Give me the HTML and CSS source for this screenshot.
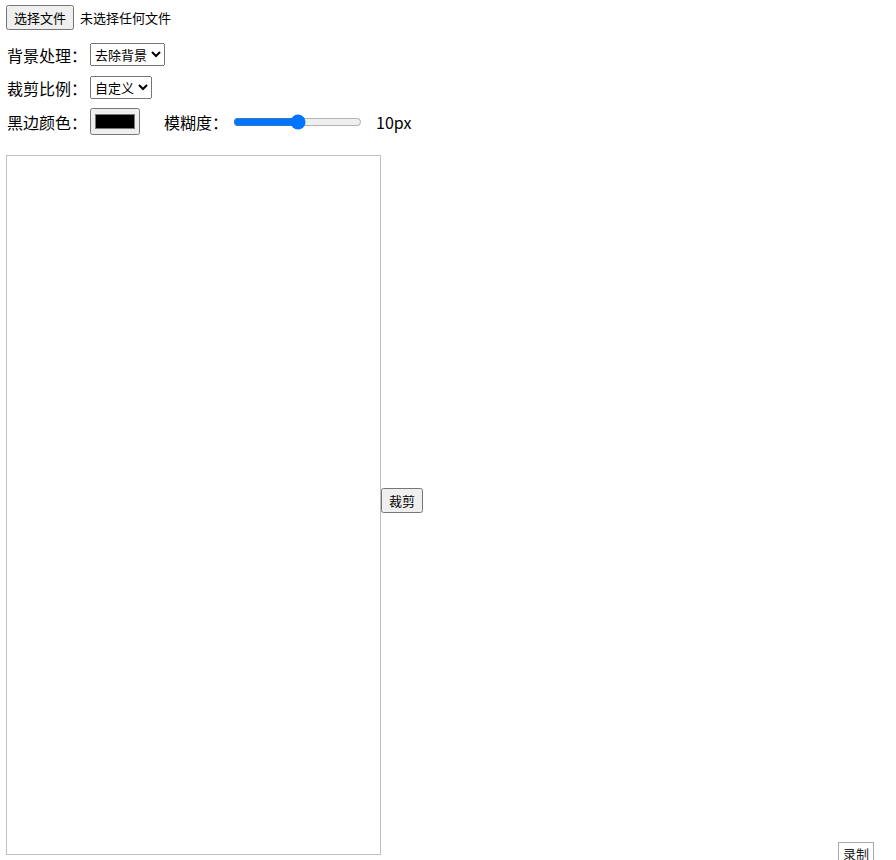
FILE: index.html
```
<html>

<head>
	<title>图片裁剪</title>
	<link rel="stylesheet" href="styles.css">
</head>

<body>
	<div class="file-row">
		<input type="file" id="fileInput" class="file-hidden" accept="image/*">
		<button class="file-btn" id="fileBtn">选择文件</button>
		<span class="file-name" id="fileName">未选择任何文件</span>
	</div>

	<div class="row row-first">
		<label>背景处理：</label>
		<select id="bgMode">
			<option>去除背景</option>
			<option>保留背景</option>
		</select>
	</div>

	<div class="row">
		<label>裁剪比例：</label>
		<select id="ratio">
			<option>自定义</option>
			<option>1:1</option>
			<option>16:9</option>
		</select>
	</div>

	<div class="row row-last">
		<label>黑边颜色：</label>
		<input type="color" id="borderColor" value="#000000">
		<label class="blur-label">模糊度：</label>
		<input type="range" id="blur" min="0" max="20" value="10">
		<span class="blur-value" id="blurValue">10px</span>
	</div>

	<div class="stage">
		<canvas id="canvas" class="canvas"></canvas>
		<button class="crop-btn" id="cropBtn">裁剪</button>
		<canvas id="preview" class="preview"></canvas>
		<button class="record-btn" id="recordBtn">录制</button>
	</div>

	<script>
		// 选择文件
		document.getElementById('fileBtn').onclick = function () {
			document.getElementById('fileInput').click();
		};
		document.getElementById('fileInput').onchange = function () {
			var f = this.files[0];
			document.getElementById('fileName').textContent = f ? f.name : '未选择任何文件';
		};

		document.getElementById('blur').oninput = function () {
			document.getElementById('blurValue').textContent = this.value + 'px';
		};
	</script>
</body>

</html>
```

FILE: styles.css
```
body {
	font-family: "Noto Sans CJK SC", "Noto Sans", sans-serif;
	margin: 5px 6px;
	color: #000;
	background-color: #fff;
}

button, select {
	font-family: inherit;
	font-size: 13px;
}

.file-row {
	display: flex;
	align-items: center;
	font-size: 13px;
}

.file-hidden {
	display: none;
}

.file-btn {
	margin: 0;
	padding: 1px 6px;
}

.file-name {
	margin-left: 6px;
}

.row {
	margin-top: 10px;
	font-size: 16px;
	display: flex;
	align-items: center;
	height: 23px;
}

.row-first {
	margin-top: 13px;
}

.row-last {
	margin-top: 8px;
	height: 29px;
}

.row label {
	margin-left: 1px;
	margin-right: 3px;
}

select {
	padding: 0;
	margin: 0;
}

input[type="color"] {
	width: 50px;
	height: 27px;
	margin: 0;
}

.row .blur-label {
	margin-left: 24px;
}

input[type="range"] {
	width: 129px;
	margin: 0 2px;
}

.blur-value {
	margin-left: 12px;
}

.stage {
	margin-top: 19px;
	padding-bottom: 14px;
	display: flex;
	align-items: flex-start;
}

.canvas {
	width: 373px;
	height: 698px;
	border: 1px solid #c0c0c0;
}

.crop-btn {
	align-self: center;
	margin: 0 0 9px 0;
	padding: 1px 6px;
}

.preview {
	width: 415px;
	height: 700px;
}

.record-btn {
	align-self: flex-end;
	margin: 0 0 -10px 0;
	padding: 1px 4px;
	background-color: #fff;
	border: 1px solid #aaa;
	color: #222;
}
```
